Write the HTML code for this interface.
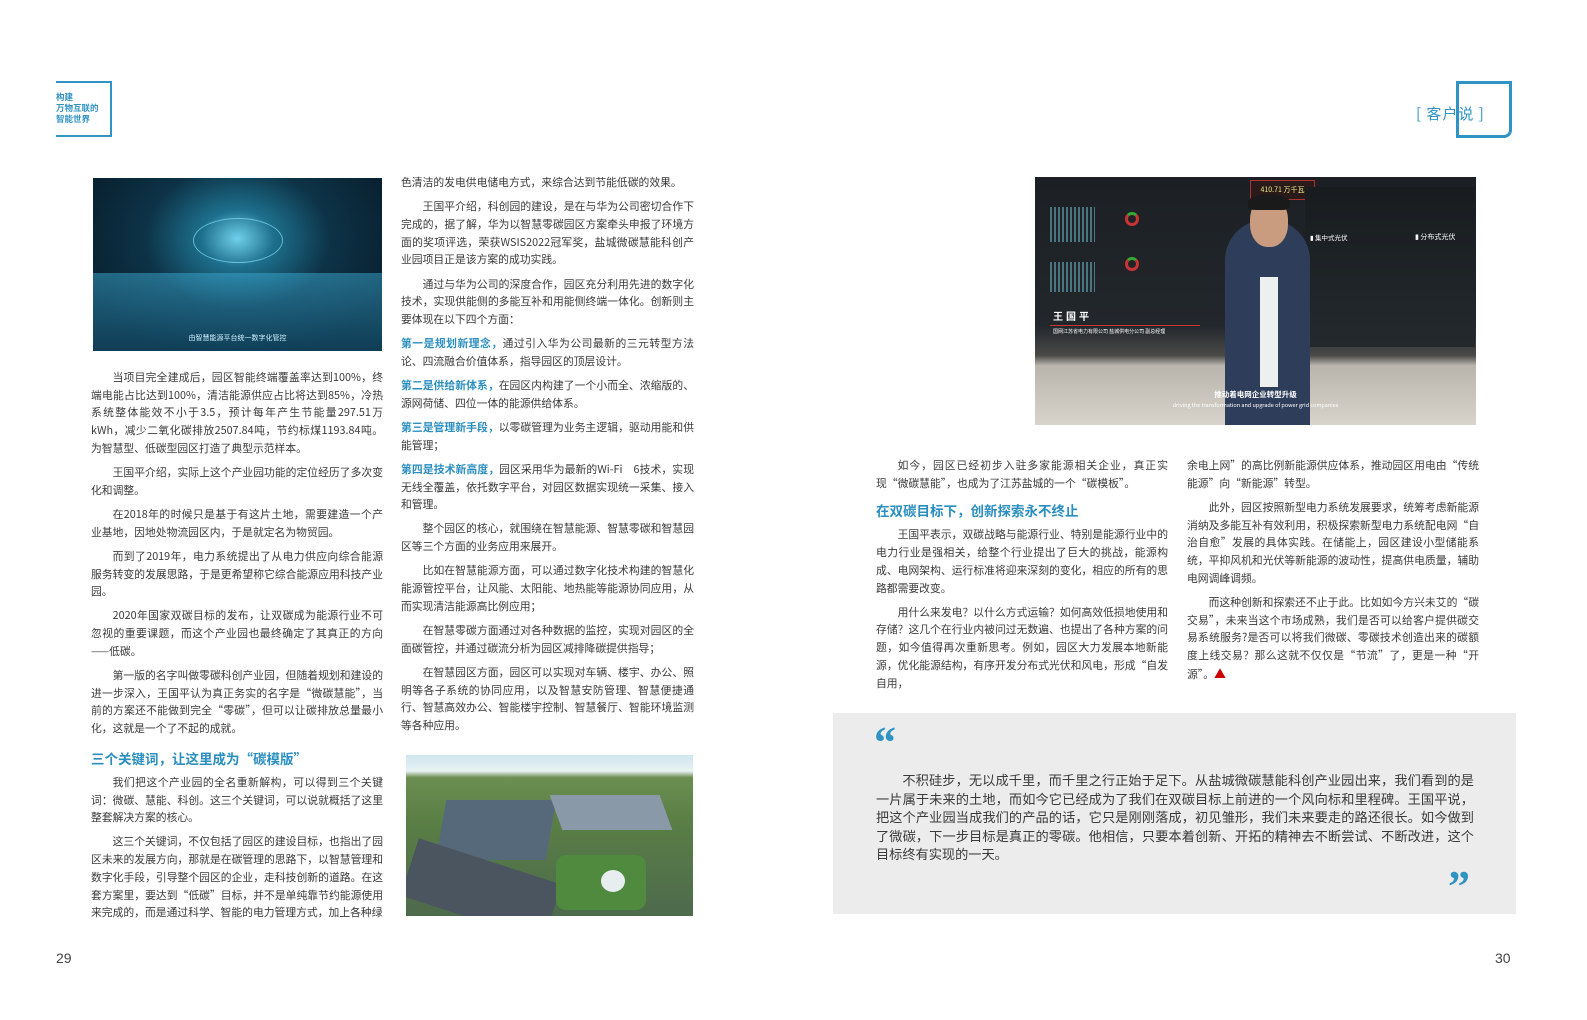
<!DOCTYPE html>
<html><head><meta charset="utf-8">
<style>
*{margin:0;padding:0;box-sizing:border-box}
body{width:1587px;height:1020px;background:#fff;position:relative;overflow:hidden;font-family:"Noto Sans CJK SC","Liberation Sans",sans-serif;color:#333}
.col{position:absolute;font-size:10.8px;line-height:17.7px;text-align:justify;color:#3a3a3a}
.col p{text-indent:2em;margin-bottom:6.5px}
.col p.ni{text-indent:0}
.b{color:#2a8fc0;font-weight:bold}
.h{color:#2a8fc0;font-weight:bold;font-size:13.5px;line-height:20px;margin:10px 0 6px}
.abs{position:absolute}
</style></head><body>

<div class="abs" style="left:56px;top:81px;width:56px;height:56px;border:2px solid #2f93c4;border-left:none"></div>
<div class="abs" style="left:56px;top:81px;width:4px;height:2px;background:#2f93c4"></div>
<div class="abs" style="left:56px;top:135px;width:4px;height:2px;background:#2f93c4"></div>
<div class="abs" style="left:56px;top:92px;font-size:8.5px;line-height:11px;color:#2f93c4;font-weight:bold">构建<br>万物互联的<br>智能世界</div>

<div class="abs" style="left:1456px;top:81px;width:56px;height:57px;border:3px solid #2f93c4;border-radius:0 0 8px 0"></div>
<div class="abs" style="left:1410px;top:96px;width:46px;height:26px;background:#fff"></div>
<div class="abs" style="left:1416px;top:103px;font-size:15px;color:#2f93c4;letter-spacing:1px">[ 客户说 ]</div>

<div class="abs" style="left:93px;top:178px;width:289px;height:173px;background:radial-gradient(ellipse at 50% 35%,#6fd0ea 0%,#1d6f8c 18%,#0d3347 45%,#08202f 80%);overflow:hidden">
  <div class="abs" style="left:0;top:95px;width:289px;height:78px;background:linear-gradient(180deg,rgba(60,170,210,.5),rgba(20,80,110,.6));"></div>
  <div class="abs" style="left:100px;top:40px;width:90px;height:45px;border-radius:50%;border:1px solid #7fe0f5;opacity:.7"></div>
  <div class="abs" style="left:0;top:155px;width:289px;text-align:center;font-size:7px;color:#cfefff">由智慧能源平台统一数字化管控</div>
</div>

<div class="col" style="left:91px;top:369px;width:292px">
<p>当项目完全建成后，园区智能终端覆盖率达到100%，终端电能占比达到100%，清洁能源供应占比将达到85%，冷热系统整体能效不小于3.5，预计每年产生节能量297.51万kWh，减少二氧化碳排放2507.84吨，节约标煤1193.84吨。为智慧型、低碳型园区打造了典型示范样本。</p>
<p>王国平介绍，实际上这个产业园功能的定位经历了多次变化和调整。</p>
<p>在2018年的时候只是基于有这片土地，需要建造一个产业基地，因地处物流园区内，于是就定名为物贸园。</p>
<p>而到了2019年，电力系统提出了从电力供应向综合能源服务转变的发展思路，于是更希望称它综合能源应用科技产业园。</p>
<p>2020年国家双碳目标的发布，让双碳成为能源行业不可忽视的重要课题，而这个产业园也最终确定了其真正的方向——低碳。</p>
<p>第一版的名字叫做零碳科创产业园，但随着规划和建设的进一步深入，王国平认为真正务实的名字是“微碳慧能”，当前的方案还不能做到完全“零碳”，但可以让碳排放总量最小化，这就是一个了不起的成就。</p>
<div class="h">三个关键词，让这里成为“碳模版”</div>
<p>我们把这个产业园的全名重新解构，可以得到三个关键词：微碳、慧能、科创。这三个关键词，可以说就概括了这里整套解决方案的核心。</p>
<p>这三个关键词，不仅包括了园区的建设目标，也指出了园区未来的发展方向，那就是在碳管理的思路下，以智慧管理和数字化手段，引导整个园区的企业，走科技创新的道路。在这套方案里，要达到“低碳”目标，并不是单纯靠节约能源使用来完成的，而是通过科学、智能的电力管理方式，加上各种绿</p>
</div>

<div class="col" style="left:401px;top:174px;width:293px">
<p class="ni">色清洁的发电供电储电方式，来综合达到节能低碳的效果。</p>
<p>王国平介绍，科创园的建设，是在与华为公司密切合作下完成的，据了解，华为以智慧零碳园区方案牵头申报了环境方面的奖项评选，荣获WSIS2022冠军奖，盐城微碳慧能科创产业园项目正是该方案的成功实践。</p>
<p>通过与华为公司的深度合作，园区充分利用先进的数字化技术，实现供能侧的多能互补和用能侧终端一体化。创新则主要体现在以下四个方面：</p>
<p class="ni"><span class="b">第一是规划新理念，</span>通过引入华为公司最新的三元转型方法论、四流融合价值体系，指导园区的顶层设计。</p>
<p class="ni"><span class="b">第二是供给新体系，</span>在园区内构建了一个小而全、浓缩版的、源网荷储、四位一体的能源供给体系。</p>
<p class="ni"><span class="b">第三是管理新手段，</span>以零碳管理为业务主逻辑，驱动用能和供能管理；</p>
<p class="ni"><span class="b">第四是技术新高度，</span>园区采用华为最新的Wi-Fi　6技术，实现无线全覆盖，依托数字平台，对园区数据实现统一采集、接入和管理。</p>
<p>整个园区的核心，就围绕在智慧能源、智慧零碳和智慧园区等三个方面的业务应用来展开。</p>
<p>比如在智慧能源方面，可以通过数字化技术构建的智慧化能源管控平台，让风能、太阳能、地热能等能源协同应用，从而实现清洁能源高比例应用；</p>
<p>在智慧零碳方面通过对各种数据的监控，实现对园区的全面碳管控，并通过碳流分析为园区减排降碳提供指导；</p>
<p>在智慧园区方面，园区可以实现对车辆、楼宇、办公、照明等各子系统的协同应用，以及智慧安防管理、智慧便捷通行、智慧高效办公、智能楼宇控制、智慧餐厅、智能环境监测等各种应用。</p>
</div>

<div class="abs" style="left:406px;top:755px;width:287px;height:161px;background:linear-gradient(180deg,#cfe6ee 0%,#e8f2f3 10%,#6c8f52 14%,#5a7f45 40%,#4d6a4d 100%);overflow:hidden">
  <div class="abs" style="left:35px;top:45px;width:110px;height:60px;background:#56697a;transform:skewX(-10deg)"></div>
  <div class="abs" style="left:150px;top:40px;width:110px;height:35px;background:#8a99a8;transform:skewX(20deg)"></div>
  <div class="abs" style="left:0;top:105px;width:150px;height:60px;background:#4a5560;transform:rotate(18deg)"></div>
  <div class="abs" style="left:150px;top:100px;width:90px;height:55px;background:#4f8a3f;border-radius:10px"></div>
  <div class="abs" style="left:195px;top:115px;width:24px;height:22px;background:#e8eef0;border-radius:50%"></div>
</div>

<div class="abs" style="left:1035px;top:177px;width:441px;height:248px;background:linear-gradient(180deg,#1c2024 0%,#22272c 60%,#4a4a48 72%,#b9b5ad 76%,#d8d4cc 100%);overflow:hidden">
  <div class="abs" style="left:15px;top:30px;width:45px;height:35px;background:repeating-linear-gradient(90deg,#6ab 0 2px,transparent 2px 4px);opacity:.6"></div>
  <div class="abs" style="left:15px;top:85px;width:45px;height:30px;background:repeating-linear-gradient(90deg,#6ab 0 2px,transparent 2px 4px);opacity:.6"></div>
  <div class="abs" style="left:90px;top:35px;width:14px;height:14px;border-radius:50%;border:3px solid #c33;border-top-color:#3a3"></div>
  <div class="abs" style="left:90px;top:80px;width:14px;height:14px;border-radius:50%;border:3px solid #c33;border-top-color:#3a3"></div>
  <div class="abs" style="left:215px;top:3px;width:65px;height:20px;border:1px solid #a33;background:#2a1a1a;font-size:7px;color:#ee8;text-align:center;line-height:18px">410.71 万千瓦</div>
  <div class="abs" style="left:270px;top:10px;width:170px;height:160px;background:linear-gradient(180deg,#181c1f,#23292d)"></div>
  <div class="abs" style="left:275px;top:55px;font-size:6.5px;color:#fff">▮ 集中式光伏</div>
  <div class="abs" style="left:380px;top:55px;font-size:7px;color:#fff">▮ 分布式光伏</div>
  <div class="abs" style="left:190px;top:43px;width:85px;height:205px;background:#2e3d5a;border-radius:40px 40px 0 0"></div>
  <div class="abs" style="left:215px;top:20px;width:38px;height:50px;background:#c99c80;border-radius:45%"></div>
  <div class="abs" style="left:213px;top:17px;width:42px;height:16px;background:#1a1a1a;border-radius:50% 50% 20% 20%"></div>
  <div class="abs" style="left:225px;top:100px;width:18px;height:110px;background:#eef0f0"></div>
  <div class="abs" style="left:18px;top:131px;font-size:10px;color:#fff;font-weight:bold;letter-spacing:3px">王国平</div>
  <div class="abs" style="left:15px;top:148px;width:150px;height:1px;background:#c33"></div>
  <div class="abs" style="left:18px;top:151px;font-size:5px;color:#fff;white-space:nowrap">国网江苏省电力有限公司 盐城供电分公司 副总经理</div>
  <div class="abs" style="left:0;top:212px;width:441px;text-align:center;font-size:7.5px;color:#fff;font-weight:bold">推动着电网企业转型升级</div>
  <div class="abs" style="left:0;top:224px;width:441px;text-align:center;font-size:5.5px;color:#fff">driving the transformation and upgrade of power grid companies</div>
</div>

<div class="col" style="left:876px;top:457px;width:292px">
<p>如今，园区已经初步入驻多家能源相关企业，真正实现“微碳慧能”，也成为了江苏盐城的一个“碳模板”。</p>
<div class="h" style="margin-top:8px">在双碳目标下，创新探索永不终止</div>
<p>王国平表示，双碳战略与能源行业、特别是能源行业中的电力行业是强相关，给整个行业提出了巨大的挑战，能源构成、电网架构、运行标准将迎来深刻的变化，相应的所有的思路都需要改变。</p>
<p>用什么来发电？以什么方式运输？如何高效低损地使用和存储？这几个在行业内被问过无数遍、也提出了各种方案的问题，如今值得再次重新思考。例如，园区大力发展本地新能源，优化能源结构，有序开发分布式光伏和风电，形成“自发自用，</p>
</div>
<div class="col" style="left:1187px;top:457px;width:292px">
<p class="ni">余电上网”的高比例新能源供应体系，推动园区用电由“传统能源”向“新能源”转型。</p>
<p>此外，园区按照新型电力系统发展要求，统筹考虑新能源消纳及多能互补有效利用，积极探索新型电力系统配电网“自治自愈”发展的具体实践。在储能上，园区建设小型储能系统，平抑风机和光伏等新能源的波动性，提高供电质量，辅助电网调峰调频。</p>
<p>而这种创新和探索还不止于此。比如如今方兴未艾的“碳交易”，未来当这个市场成熟，我们是否可以给客户提供碳交易系统服务?是否可以将我们微碳、零碳技术创造出来的碳额度上线交易？那么这就不仅仅是“节流”了，更是一种“开源”。<span style="color:#c00;font-size:12px">▲</span></p>
</div>

<div class="abs" style="left:833px;top:713px;width:683px;height:201px;background:#ececec"></div>
<div class="abs" style="left:874px;top:718px;font-size:44px;font-weight:bold;color:#2f93c4;font-family:'Liberation Serif',serif;line-height:50px">“</div>
<div class="abs" style="left:1448px;top:862px;font-size:44px;font-weight:bold;color:#2f93c4;font-family:'Liberation Serif',serif;line-height:50px">”</div>
<div class="abs" style="left:876px;top:771px;width:598px;font-size:13.2px;line-height:18.5px;color:#3a3a3a;text-align:justify;text-indent:2em">不积硅步，无以成千里，而千里之行正始于足下。从盐城微碳慧能科创产业园出来，我们看到的是一片属于未来的土地，而如今它已经成为了我们在双碳目标上前进的一个风向标和里程碑。王国平说，把这个产业园当成我们的产品的话，它只是刚刚落成，初见雏形，我们未来要走的路还很长。如今做到了微碳，下一步目标是真正的零碳。他相信，只要本着创新、开拓的精神去不断尝试、不断改进，这个目标终有实现的一天。</div>

<div class="abs" style="left:56px;top:950px;font-size:14px;color:#444;font-family:'Liberation Sans',sans-serif">29</div>
<div class="abs" style="left:1495px;top:950px;font-size:14px;color:#444;font-family:'Liberation Sans',sans-serif">30</div>
</body></html>
